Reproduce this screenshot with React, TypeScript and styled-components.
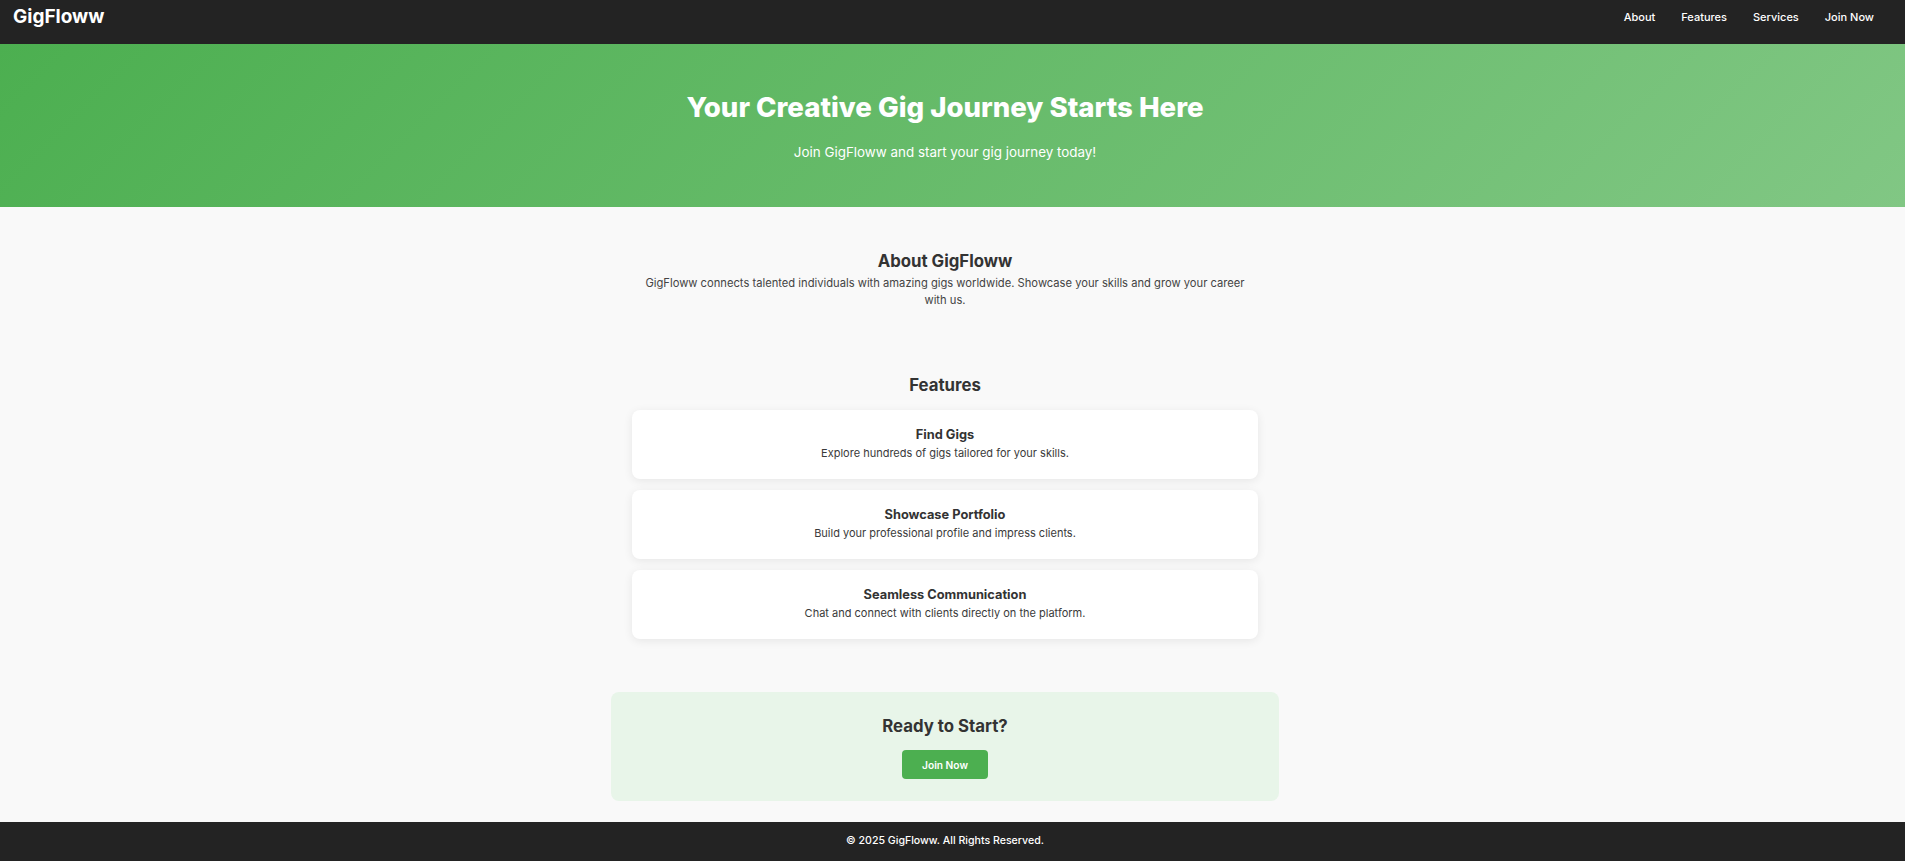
import React from "react";
import styled, { createGlobalStyle } from "styled-components";

const GlobalStyle = createGlobalStyle`
  html, body { margin: 0; padding: 0; }
  body {
    font-family: "Inter", "Noto Sans", "Liberation Sans", sans-serif;
    background: #f9f9f9;
    color: #333;
  }
  * { box-sizing: border-box; }
`;

const GUTTER = 15;

const NavBar = styled.header`
  height: 44px;
  background: #232323;
  display: flex;
  align-items: center;
  justify-content: space-between;
  padding: 0 ${16 + GUTTER}px 10px 13px;
`;

const Logo = styled.div`
  color: #fff;
  font-size: 19px;
  font-weight: 700;
  line-height: 24px;
`;

const NavLinks = styled.nav`
  display: flex;
  gap: 26px;
`;

const NavLink = styled.a`
  color: #fff;
  font-size: 11px;
  font-weight: 500;
  text-decoration: none;
  line-height: 16px;
`;

const Hero = styled.section`
  background: linear-gradient(135deg, #4caf50 0%, #81c784 100%);
  color: #fff;
  text-align: center;
  padding: 46px ${20 + GUTTER}px 45px 20px;
`;

const HeroTitle = styled.h1`
  margin: 0;
  font-size: 27.6px;
  font-weight: 800;
  line-height: 34px;
`;

const HeroSub = styled.p`
  margin: 18px 0 0;
  font-size: 13.4px;
  line-height: 20px;
`;

const MainArea = styled.div`
  padding-right: ${GUTTER}px;
`;

const Main = styled.main`
  max-width: 668px;
  margin: 0 auto;
  padding-top: 42px;
`;

const Section = styled.section<{ $gap?: number }>`
  text-align: center;
  padding: 0 21px;
  margin-top: ${(p) => p.$gap ?? 0}px;
`;

const SectionTitle = styled.h2`
  margin: 0;
  font-size: 16.8px;
  font-weight: 700;
  line-height: 24px;
  color: #333;
`;

const Paragraph = styled.p`
  margin: 2px auto 0;
  max-width: 612px;
  font-size: 11.2px;
  line-height: 17px;
  color: #444;
`;

const CardList = styled.div`
  display: flex;
  flex-direction: column;
  gap: 11px;
  margin-top: 13px;
`;

const Card = styled.div`
  background: #fff;
  border-radius: 8px;
  box-shadow: 0 2px 10px rgba(0, 0, 0, 0.08);
  padding: 16px 20px 18px;
  height: 69px;
`;

const CardTitle = styled.h3`
  margin: 0;
  font-size: 12.8px;
  font-weight: 700;
  line-height: 18px;
  color: #333;
`;

const CardText = styled.p`
  margin: 1px 0 0;
  font-size: 11px;
  line-height: 16px;
  color: #3a3a3a;
`;

const Cta = styled.section`
  margin-top: 53px;
  background: #e8f5e9;
  border-radius: 8px;
  text-align: center;
  padding: 22px 20px 22px;
`;

const CtaButton = styled.button`
  margin-top: 12px;
  height: 29px;
  width: 86px;
  border: none;
  border-radius: 4px;
  background: #4caf50;
  color: #fff;
  font-family: inherit;
  font-size: 10.2px;
  font-weight: 600;
  cursor: pointer;
`;

const Footer = styled.footer`
  margin-top: 21px;
  background: #232323;
  color: #fff;
  text-align: center;
  padding: 10px ${20 + GUTTER}px 12px 20px;
  font-size: 10.6px;
  font-weight: 500;
  line-height: 18px;
`;

const features = [
  { title: "Find Gigs", text: "Explore hundreds of gigs tailored for your skills." },
  { title: "Showcase Portfolio", text: "Build your professional profile and impress clients." },
  { title: "Seamless Communication", text: "Chat and connect with clients directly on the platform." },
];

export default function App() {
  return (
    <>
      <GlobalStyle />
      <NavBar>
        <Logo>GigFloww</Logo>
        <NavLinks>
          <NavLink href="#about">About</NavLink>
          <NavLink href="#features">Features</NavLink>
          <NavLink href="#services">Services</NavLink>
          <NavLink href="#join">Join Now</NavLink>
        </NavLinks>
      </NavBar>
      <Hero>
        <HeroTitle>Your Creative Gig Journey Starts Here</HeroTitle>
        <HeroSub>Join GigFloww and start your gig journey today!</HeroSub>
      </Hero>
      <MainArea>
        <Main>
          <Section id="about">
            <SectionTitle>About GigFloww</SectionTitle>
            <Paragraph>
              GigFloww connects talented individuals with amazing gigs worldwide. Showcase your skills and grow your career with us.
            </Paragraph>
          </Section>
          <Section id="features" $gap={64}>
            <SectionTitle>Features</SectionTitle>
            <CardList>
              {features.map((f) => (
                <Card key={f.title}>
                  <CardTitle>{f.title}</CardTitle>
                  <CardText>{f.text}</CardText>
                </Card>
              ))}
            </CardList>
          </Section>
          <Cta id="join">
            <SectionTitle>Ready to Start?</SectionTitle>
            <CtaButton>Join Now</CtaButton>
          </Cta>
        </Main>
      </MainArea>
      <Footer>© 2025 GigFloww. All Rights Reserved.</Footer>
    </>
  );
}
